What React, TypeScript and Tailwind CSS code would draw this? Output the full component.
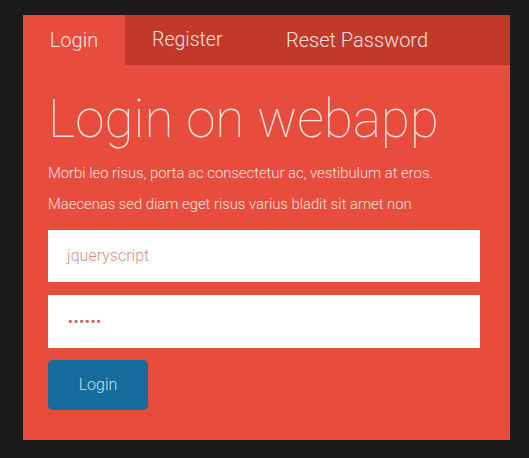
import React from "react";

export default function App() {
  return (
    <div className="w-[529px] h-[458px] bg-[#1b1b1b] pt-[15px] pl-[23px]" style={{ fontFamily: "Roboto, 'Liberation Sans', sans-serif" }}>
      <div className="w-[487px] h-[425px] bg-[#e74c3c] flex flex-col">
        <div className="flex h-[50px] bg-[#c0392b] text-[20px] font-light text-[#fde3dc]">
          <div className="w-[102px] bg-[#e74c3c] flex items-center justify-center">Login</div>
          <div className="w-[135px] pl-[27px] flex items-center text-[19.5px]">Register</div>
          <div className="pl-[26px] flex items-center">Reset Password</div>
        </div>
        <div className="px-[25px] flex flex-col">
          <h1 className="mt-[24px] text-[53px] leading-[60px] font-thin text-[#fde6e1]">Login on webapp</h1>
          <p className="mt-[14px] text-[14.8px] leading-[20px] font-light text-[#fde6e1]">Morbi leo risus, porta ac consectetur ac, vestibulum at eros.</p>
          <p className="mt-[11px] text-[14.8px] leading-[20px] font-light text-[#fde6e1]">Maecenas sed diam eget risus varius bladit sit amet non</p>
          <div className="mt-[16px] w-[432px] h-[52px] bg-white flex items-center pl-[19px] text-[16px] font-light text-[#d98f86]">jqueryscript</div>
          <div className="mt-[13px] w-[432px] h-[53px] bg-white flex items-center pl-[20px] text-[#c0605a] text-[13px] tracking-[1px] font-bold">••••••</div>
          <div className="mt-[12px] w-[100px] h-[50px] rounded-[5px] bg-[#166b9d] flex items-center justify-center text-[16px] font-light text-[#b9e3f5]">Login</div>
        </div>
      </div>
    </div>
  );
}
